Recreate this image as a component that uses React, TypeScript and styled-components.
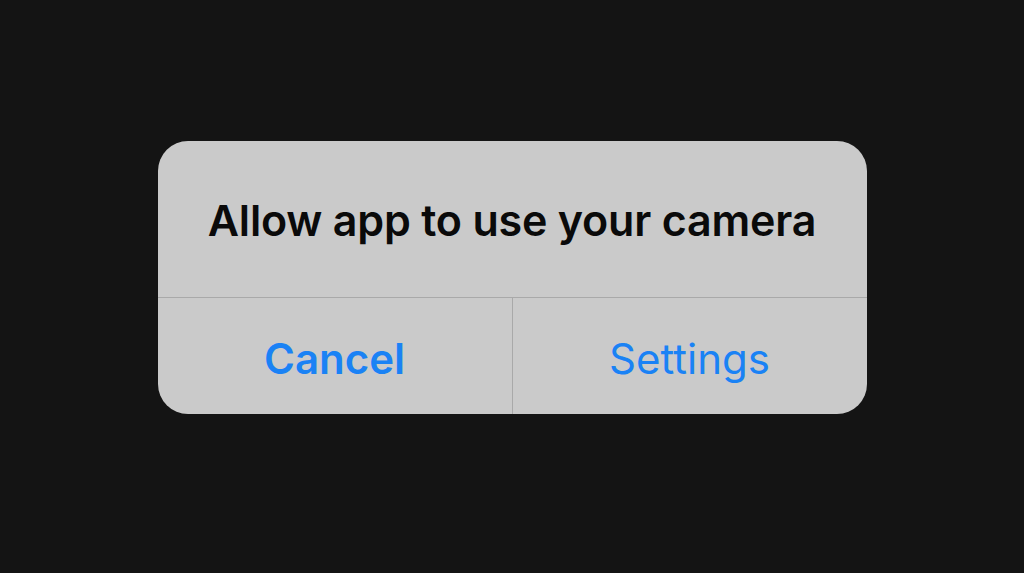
import React from "react";
import styled, { createGlobalStyle } from "styled-components";

const Global = createGlobalStyle`
  html, body { margin: 0; padding: 0; background: #141414; }
  body { font-family: Inter, "Liberation Sans", sans-serif; }
`;

const Screen = styled.div`
  width: 1024px;
  height: 573px;
  display: flex;
  justify-content: center;
  align-items: flex-start;
  padding-top: 141px;
  box-sizing: border-box;
  background: #141414;
`;

const Alert = styled.div`
  width: 709px;
  height: 273px;
  border-radius: 30px;
  background: #cacaca;
  display: flex;
  flex-direction: column;
  overflow: hidden;
`;

const Header = styled.div`
  height: 157px;
  display: flex;
  align-items: center;
  justify-content: center;
  border-bottom: 1px solid #a9a9a9;
  box-sizing: border-box;
  padding-top: 2px;
`;

const Title = styled.h1`
  margin: 0;
  font-size: 43px;
  font-weight: 600;
  color: #0a0a0a;
  letter-spacing: -0.2px;
`;

const Actions = styled.div`
  flex: 1;
  display: grid;
  grid-template-columns: 355px 1fr;
`;

const Action = styled.button<{ $bold?: boolean; $divider?: boolean }>`
  border: none;
  background: transparent;
  font-family: inherit;
  font-size: 42px;
  font-weight: ${(p) => (p.$bold ? 600 : 400)};
  color: #1a82f5;
  border-right: ${(p) => (p.$divider ? "1px solid #a9a9a9" : "none")};
  padding: 5px 0 0;
  cursor: pointer;
`;

export default function App() {
  return (
    <>
      <Global />
      <Screen>
        <Alert>
          <Header>
            <Title>Allow app to use your camera</Title>
          </Header>
          <Actions>
            <Action $bold $divider>Cancel</Action>
            <Action>Settings</Action>
          </Actions>
        </Alert>
      </Screen>
    </>
  );
}
